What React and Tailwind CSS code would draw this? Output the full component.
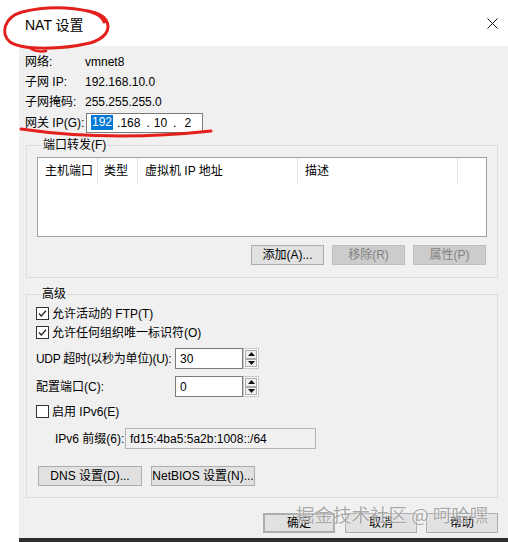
import React from "react";

const F = "font-['Liberation_Sans','Noto_Sans_CJK_SC',sans-serif]";

function Btn({ children, className = "", disabled = false, w = "w-[73px]" }) {
  return (
    <div
      className={`${w} h-[20px] flex items-center justify-center border text-[12px] leading-none ${
        disabled
          ? "bg-[#cccccc] border-[#bfbfbf] text-[#838383]"
          : "bg-[#e1e1e1] border-[#adadad] text-black"
      } ${className}`}
    >
      {children}
    </div>
  );
}

function Check({ checked }) {
  return (
    <div className="w-[13px] h-[13px] border border-[#333333] bg-white flex items-center justify-center">
      {checked && (
        <svg width="11" height="11" viewBox="0 0 11 11">
          <path d="M2 5.5 L4.3 8 L9 2.8" fill="none" stroke="#222" strokeWidth="1.3" />
        </svg>
      )}
    </div>
  );
}

function Spin({ value }) {
  return (
    <div className="flex h-[21px]">
      <div className="w-[68px] h-full border border-[#7a7a7a] bg-white pl-[4px] flex items-center text-[12px]">
        {value}
      </div>
      <div className="w-[16px] h-full flex flex-col border border-[#c8c8c8] bg-white">
        <div className="flex-1 mx-[1px] mt-[1px] border border-[#acacac] bg-[#f0f0f0] flex items-center justify-center">
          <svg width="7" height="4" viewBox="0 0 7 4"><path d="M0 4 L3.5 0 L7 4Z" fill="#111" /></svg>
        </div>
        <div className="flex-1 mx-[1px] mb-[1px] border border-[#acacac] bg-[#f0f0f0] flex items-center justify-center">
          <svg width="7" height="4" viewBox="0 0 7 4"><path d="M0 0 L3.5 4 L7 0Z" fill="#111" /></svg>
        </div>
      </div>
    </div>
  );
}

export default function App() {
  return (
    <div className={`relative w-[508px] h-[542px] bg-white overflow-hidden ${F} text-[12px] text-black`}>
      {/* title bar */}
      <div className="h-[46px] flex items-center justify-between pl-[25px] pr-[10px] pt-[3px]">
        <span className="text-[14px] leading-none">NAT 设置</span>
        <svg width="11" height="11" viewBox="0 0 11 11" className="mt-[-2px]">
          <path d="M0.5 0.5 L10.5 10.5 M10.5 0.5 L0.5 10.5" stroke="#111" strokeWidth="1" />
        </svg>
      </div>

      {/* body */}
      <div className="ml-[19px] h-[492px] bg-[#f0f0f0] pt-[6px] pl-[6px] pr-[10px] flex flex-col">
        <div className="flex h-[20px] items-center">
          <span className="w-[60px]">网络:</span>
          <span>vmnet8</span>
        </div>
        <div className="flex h-[20px] items-center">
          <span className="w-[60px]">子网 IP:</span>
          <span>192.168.10.0</span>
        </div>
        <div className="flex h-[20px] items-center">
          <span className="w-[60px]">子网掩码:</span>
          <span>255.255.255.0</span>
        </div>
        <div className="flex h-[21px] items-center">
          <span className="w-[61px] whitespace-nowrap">网关 IP(G):</span>
          <div className="w-[117px] h-[20px] bg-white border border-[#7a7a7a] flex items-center pl-[4px]">
            <span className="bg-[#0078d7] text-white px-[1px] leading-[15px]">192</span>
            <span className="ml-[4px]">.</span>
            <span className="ml-[0px]">168</span>
            <span className="ml-[6px]">.</span>
            <span className="ml-[4px]">10</span>
            <span className="ml-[6px]">.</span>
            <span className="ml-[8px]">2</span>
          </div>
        </div>

        {/* port forwarding */}
        <fieldset className="ml-[1px] mt-[5px] w-[472px] border border-[#dcdcdc] pl-[10px] pr-[10px] pt-[5px] pb-[12px]">
          <legend className="ml-[5px] px-[1px] leading-[14px]">端口转发(F)</legend>
          <div className="w-[450px] h-[80px] bg-white border border-[#a0a0a0]">
            <div className="flex h-[26px] items-center">
              <div className="w-[60px] h-full flex items-center pl-[7px] border-r border-[#e5e5e5]">主机端口</div>
              <div className="w-[40px] h-full flex items-center pl-[6px] border-r border-[#e5e5e5]">类型</div>
              <div className="w-[160px] h-full flex items-center pl-[7px] border-r border-[#e5e5e5]">虚拟机 IP 地址</div>
              <div className="w-[160px] h-full flex items-center pl-[7px] border-r border-[#e5e5e5]">描述</div>
            </div>
          </div>
          <div className="flex justify-end gap-[8px] mt-[8px] pr-[1px]">
            <Btn>添加(A)...</Btn>
            <Btn disabled>移除(R)</Btn>
            <Btn disabled>属性(P)</Btn>
          </div>
        </fieldset>

        {/* advanced */}
        <fieldset className="ml-[1px] mt-[9px] w-[472px] border border-[#dcdcdc] pl-[9px] pr-[10px] pt-[3px] pb-[11px]">
          <legend className="ml-[5px] px-[1px] leading-[14px]">高级</legend>
          <div className="flex h-[19px] items-center gap-[3px]">
            <Check checked />
            <span>允许活动的 FTP(T)</span>
          </div>
          <div className="flex h-[19px] items-center gap-[3px]">
            <Check checked />
            <span>允许任何组织唯一标识符(O)</span>
          </div>
          <div className="flex h-[21px] items-center mt-[6px]">
            <span className="w-[139px] whitespace-nowrap tracking-[-0.3px]">UDP 超时(以秒为单位)(U):</span>
            <Spin value="30" />
          </div>
          <div className="flex h-[21px] items-center mt-[7px]">
            <span className="w-[139px] whitespace-nowrap">配置端口(C):</span>
            <Spin value="0" />
          </div>
          <div className="flex h-[19px] items-center gap-[3px] mt-[5px]">
            <Check />
            <span>启用 IPv6(E)</span>
          </div>
          <div className="flex h-[21px] items-center mt-[7px] pl-[19px]">
            <span className="w-[70px] whitespace-nowrap">IPv6 前缀(6):</span>
            <div className="w-[191px] h-[21px] border border-[#b5b5b5] bg-[#f0f0f0] pl-[4px] flex items-center">
              fd15:4ba5:5a2b:1008::/64
            </div>
          </div>
          <div className="flex gap-[9px] mt-[17px] ml-[2px]">
            <Btn w="w-[104px]">DNS 设置(D)...</Btn>
            <Btn w="w-[104px]">NetBIOS 设置(N)...</Btn>
          </div>
        </fieldset>

        {/* dialog buttons */}
        <div className="flex justify-end mt-[15px]">
          <Btn w="w-[72px]" className="border-2 border-[#0078d7]">确定</Btn>
          <Btn w="w-[72px]" className="ml-[10px]">取消</Btn>
          <Btn w="w-[72px]" className="ml-[9px]">帮助</Btn>
        </div>
      </div>
      <div className="ml-[19px] h-[4px] bg-[#2e2e2e]" />

      {/* watermark */}
      <div className="absolute left-[296px] top-[502px] text-[18.5px] leading-[24px] text-[#999999]/85 whitespace-nowrap [text-shadow:0_0_2px_#ffffff] font-['Noto_Sans_CJK_SC',sans-serif]">
        掘金技术社区 @ 呵哈嘿
      </div>

      {/* red annotations */}
      <svg className="absolute left-0 top-0 pointer-events-none" width="508" height="542" viewBox="0 0 508 542">
        <path
          d="M104 22 C100 8, 55 4, 22 12 C4 17, 0 34, 10 42 C22 50, 60 50, 90 43 C104 39, 112 30, 106 20 C102 14, 94 12, 88 11"
          fill="none"
          stroke="#e3201b"
          strokeWidth="3"
          strokeLinecap="round"
        />
        <path d="M31 49 C35 51, 40 52, 46 51" fill="none" stroke="#e3201b" strokeWidth="2.5" strokeLinecap="round" />
        <path d="M21 129 Q 110 142 211 131" fill="none" stroke="#e3201b" strokeWidth="3" strokeLinecap="round" />
      </svg>
    </div>
  );
}
